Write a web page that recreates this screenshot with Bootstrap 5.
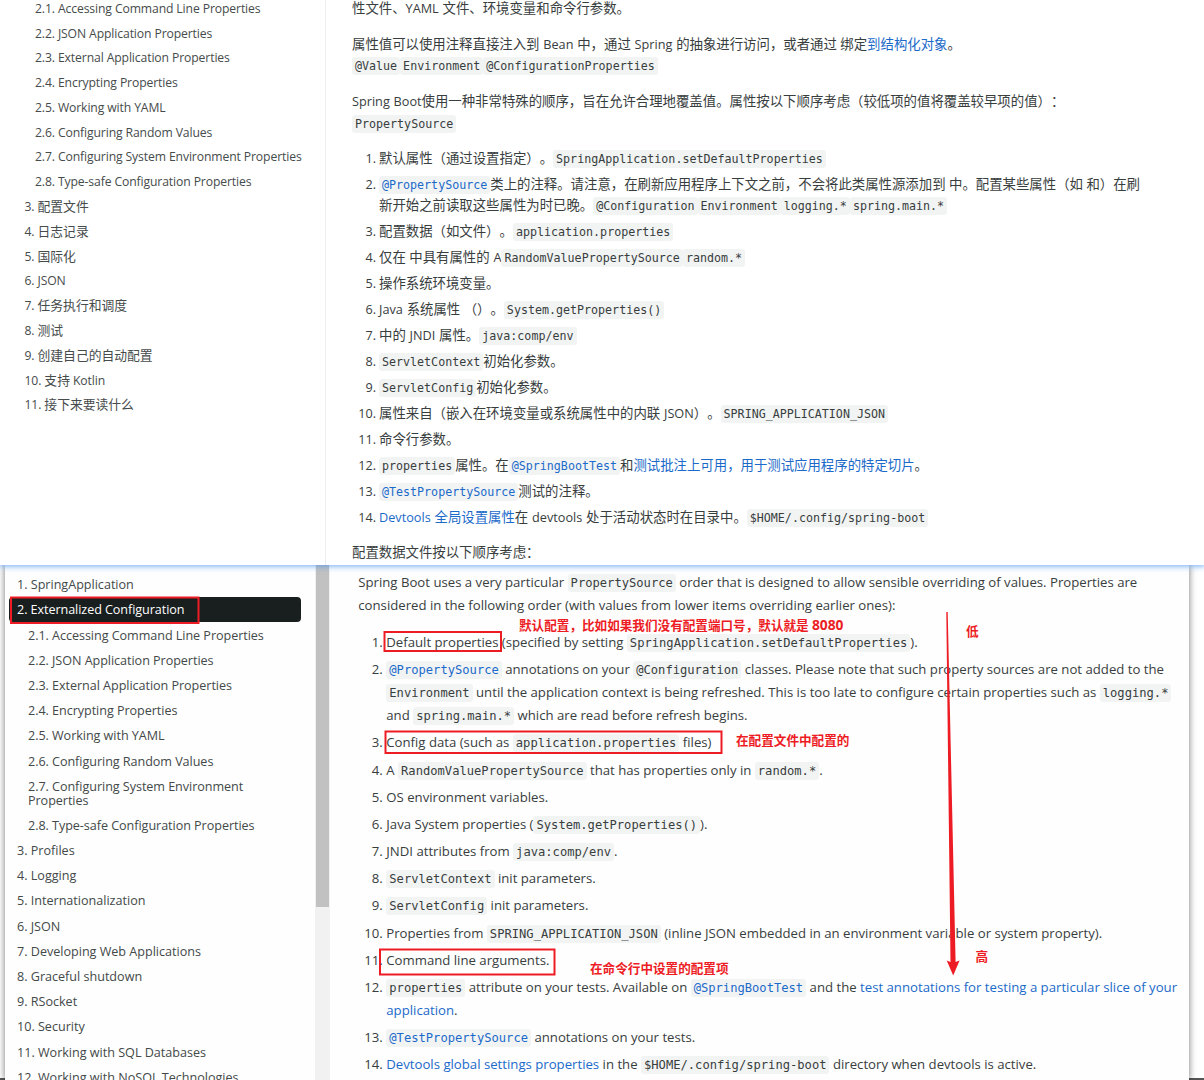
<!DOCTYPE html>
<html lang="zh-CN">
<head>
<meta charset="utf-8">
<meta name="viewport" content="width=device-width, initial-scale=1">
<title>Externalized Configuration</title>
<link href="https://cdn.jsdelivr.net/npm/bootstrap@5.3.0/dist/css/bootstrap.min.css" rel="stylesheet">
<style>
body{height:1080px;overflow:hidden;background:#fff;color:#383d3d;font-family:"Open Sans","Noto Sans CJK SC",sans-serif;text-spacing-trim:space-all}
a{color:#1b6ac9;text-decoration:none}
code{font-family:"DejaVu Sans Mono",monospace;line-height:1;background:#f2f4f4;border-radius:3px;padding:2px 3px;color:inherit}
.line{display:block;white-space:nowrap}
.num{flex:none;text-align:right;white-space:pre}
/* upper window */
.win-a{height:565px;z-index:2;box-shadow:0 0 6px 1px rgba(60,140,240,.75)}
.toc-a{width:326px;border-right:1px solid #eceff0;font-size:12.2px;line-height:24.81px;letter-spacing:-.12px;color:#464b4b}
.toc-a ul{margin-top:-3.3px}
.toc-a li{height:24.81px;padding-left:24.5px;white-space:nowrap}
.toc-a li.sub{padding-left:35px}
.toc-a .zh{font-size:12.8px;line-height:1;letter-spacing:0}
.doc-a{padding-left:26px;font-size:13.4px;line-height:21.7px}
.doc-a .line{height:21.7px}
.doc-a .en{font-size:12.7px;line-height:1;word-spacing:.5px}
.doc-a .num{font-size:12.6px}
.doc-a p{margin:0 0 14px}
.doc-a p:first-child{margin-top:-2.2px}
.doc-a ol{margin:-.7px 0 12.9px}
.doc-a li{margin-bottom:4.3px}
.doc-a .num{width:27px;padding-right:3px}
.doc-a code{font-size:11.67px}
/* lower window */
.win-b{height:515px;background:#fff}
.panel{margin-left:5px;width:1184px;background:#fefefe;box-shadow:0 0 7px rgba(0,0,0,.55)}
.toc-b{width:310px;padding:6.6px 0 0 3.5px;font-size:12.6px;line-height:14px;letter-spacing:-.01px;color:#434949}
.toc-b li{padding:6.6px 8.5px 4.6px;width:292.5px;white-space:nowrap;border-radius:4px}
.toc-b li.sub{padding-left:19.5px;letter-spacing:-.05px}
.toc-b li.now{background:#191e1e;color:#fff;letter-spacing:-.07px}
.track{width:15px;background:#f1f1f1}
.thumb{width:12.5px;height:342px;background:#c1c1c1;margin-left:1px}
.doc-b{padding:6.2px 0 0 28.3px;font-size:13.18px;line-height:23px}
.doc-b .line{height:23px}
.doc-b p{margin:0 0 13.8px}
.doc-b li{margin-bottom:4.2px}
.doc-b .num{width:28px;padding-right:3.5px}
.doc-b code{font-size:12.14px}
.marks{left:0;top:0;z-index:3;pointer-events:none}
.note{z-index:3;font:bold 12.6px/16px "Open Sans","Noto Sans CJK SC",sans-serif;color:#ed1c24;white-space:nowrap}
.port{font-size:13.8px;line-height:1}
.n1{left:519px;top:618px}.n2{left:736px;top:733px}.n3{left:590px;top:961px}.n4{left:966px;top:624px}.n5{left:975.5px;top:949px}
.edge{height:2px;bottom:0;background:#555}
</style>
</head>
<body class="position-relative">
<section class="win-a d-flex bg-white position-relative">
<nav class="toc-a flex-shrink-0 overflow-hidden">
<ul class="list-unstyled mb-0">
<li class="sub">2.1. Accessing Command Line Properties</li>
<li class="sub">2.2. JSON Application Properties</li>
<li class="sub">2.3. External Application Properties</li>
<li class="sub">2.4. Encrypting Properties</li>
<li class="sub">2.5. Working with YAML</li>
<li class="sub">2.6. Configuring Random Values</li>
<li class="sub">2.7. Configuring System Environment Properties</li>
<li class="sub">2.8. Type-safe Configuration Properties</li>
<li>3. <span class="zh">配置文件</span></li>
<li>4. <span class="zh">日志记录</span></li>
<li>5. <span class="zh">国际化</span></li>
<li>6. JSON</li>
<li>7. <span class="zh">任务执行和调度</span></li>
<li>8. <span class="zh">测试</span></li>
<li>9. <span class="zh">创建自己的自动配置</span></li>
<li>10. <span class="zh">支持</span> Kotlin</li>
<li>11. <span class="zh">接下来要读什么</span></li>
</ul>
</nav>
<article class="doc-a flex-grow-1 overflow-hidden">
<p><span class="line">性文件、<span class="en">YAML </span>文件、环境变量和命令行参数。</span></p>
<p><span class="line">属性值可以使用注释直接注入到<span class="en"> Bean </span>中，通过<span class="en"> Spring </span>的抽象进行访问，或者通过 绑定<a href="#">到结构化对象</a>。</span>
<span class="line"><code>@Value</code><code>Environment</code><code>@ConfigurationProperties</code></span></p>
<p><span class="line"><span class="en">Spring Boot</span>使用一种非常特殊的顺序，旨在允许合理地覆盖值。属性按以下顺序考虑（较低项的值将覆盖较早项的值）：</span>
<span class="line"><code>PropertySource</code></span></p>
<ol class="list-unstyled">
<li class="d-flex"><span class="num">1.</span><div><span class="line">默认属性（通过设置指定）。<code>SpringApplication.setDefaultProperties</code></span></div></li>
<li class="d-flex"><span class="num">2.</span><div><span class="line"><a href="#"><code>@PropertySource</code></a>类上的注释。请注意，在刷新应用程序上下文之前，不会将此类属性源添加到 中。配置某些属性（如 和）在刷</span><span class="line">新开始之前读取这些属性为时已晚。<code>@Configuration</code><code>Environment</code><code>logging.*</code><code>spring.main.*</code></span></div></li>
<li class="d-flex"><span class="num">3.</span><div><span class="line">配置数据（如文件）。<code>application.properties</code></span></div></li>
<li class="d-flex"><span class="num">4.</span><div><span class="line">仅在 中具有属性的<span class="en"> A</span><code>RandomValuePropertySource</code><code>random.*</code></span></div></li>
<li class="d-flex"><span class="num">5.</span><div><span class="line">操作系统环境变量。</span></div></li>
<li class="d-flex"><span class="num">6.</span><div><span class="line"><span class="en">Java </span>系统属性 （）。<code>System.getProperties()</code></span></div></li>
<li class="d-flex"><span class="num">7.</span><div><span class="line">中的<span class="en"> JNDI </span>属性。<code>java:comp/env</code></span></div></li>
<li class="d-flex"><span class="num">8.</span><div><span class="line"><code>ServletContext</code>初始化参数。</span></div></li>
<li class="d-flex"><span class="num">9.</span><div><span class="line"><code>ServletConfig</code>初始化参数。</span></div></li>
<li class="d-flex"><span class="num">10.</span><div><span class="line">属性来自（嵌入在环境变量或系统属性中的内联<span class="en"> JSON</span>）。<code>SPRING_APPLICATION_JSON</code></span></div></li>
<li class="d-flex"><span class="num">11.</span><div><span class="line">命令行参数。</span></div></li>
<li class="d-flex"><span class="num">12.</span><div><span class="line"><code>properties</code>属性。在<a href="#"><code>@SpringBootTest</code></a>和<a href="#">测试批注上可用，用于测试应用程序的特定切片</a>。</span></div></li>
<li class="d-flex"><span class="num">13.</span><div><span class="line"><a href="#"><code>@TestPropertySource</code></a>测试的注释。</span></div></li>
<li class="d-flex"><span class="num">14.</span><div><span class="line"><a href="#"><span class="en">Devtools </span>全局设置属性</a>在<span class="en"> devtools </span>处于活动状态时在目录中。<code>$HOME/.config/spring-boot</code></span></div></li>
</ol>
<p class="mb-0"><span class="line">配置数据文件按以下顺序考虑：</span></p>
</article>
</section>
<section class="win-b position-relative overflow-hidden">
<div class="edge position-absolute start-0 end-0"></div>
<div class="panel d-flex h-100 position-relative">
<nav class="toc-b flex-shrink-0">
<ul class="list-unstyled mb-0">
<li>1. SpringApplication</li>
<li class="now">2. Externalized Configuration</li>
<li class="sub">2.1. Accessing Command Line Properties</li>
<li class="sub">2.2. JSON Application Properties</li>
<li class="sub">2.3. External Application Properties</li>
<li class="sub">2.4. Encrypting Properties</li>
<li class="sub">2.5. Working with YAML</li>
<li class="sub">2.6. Configuring Random Values</li>
<li class="sub">2.7. Configuring System Environment<br>Properties</li>
<li class="sub">2.8. Type-safe Configuration Properties</li>
<li>3. Profiles</li>
<li>4. Logging</li>
<li>5. Internationalization</li>
<li>6. JSON</li>
<li>7. Developing Web Applications</li>
<li>8. Graceful shutdown</li>
<li>9. RSocket</li>
<li>10. Security</li>
<li>11. Working with SQL Databases</li>
<li>12. Working with NoSQL Technologies</li>
</ul>
</nav>
<div class="track flex-shrink-0"><div class="thumb"></div></div>
<article class="doc-b flex-grow-1">
<p><span class="line">Spring Boot uses a very particular <code>PropertySource</code> order that is designed to allow sensible overriding of values. Properties are</span>
<span class="line">considered in the following order (with values from lower items overriding earlier ones):</span></p>
<ol class="list-unstyled mb-0">
<li class="d-flex"><span class="num">1.</span><div><span class="line">Default properties (specified by setting <code>SpringApplication.setDefaultProperties</code>).</span></div></li>
<li class="d-flex"><span class="num">2.</span><div><span class="line"><a href="#"><code>@PropertySource</code></a> annotations on your <code>@Configuration</code> classes. Please note that such property sources are not added to the</span>
<span class="line"><code>Environment</code> until the application context is being refreshed. This is too late to configure certain properties such as <code>logging.*</code></span>
<span class="line">and <code>spring.main.*</code> which are read before refresh begins.</span></div></li>
<li class="d-flex"><span class="num">3.</span><div><span class="line">Config data (such as <code>application.properties</code> files)</span></div></li>
<li class="d-flex"><span class="num">4.</span><div><span class="line">A <code>RandomValuePropertySource</code> that has properties only in <code>random.*</code>.</span></div></li>
<li class="d-flex"><span class="num">5.</span><div><span class="line">OS environment variables.</span></div></li>
<li class="d-flex"><span class="num">6.</span><div><span class="line">Java System properties (<code>System.getProperties()</code>).</span></div></li>
<li class="d-flex"><span class="num">7.</span><div><span class="line">JNDI attributes from <code>java:comp/env</code>.</span></div></li>
<li class="d-flex"><span class="num">8.</span><div><span class="line"><code>ServletContext</code> init parameters.</span></div></li>
<li class="d-flex"><span class="num">9.</span><div><span class="line"><code>ServletConfig</code> init parameters.</span></div></li>
<li class="d-flex"><span class="num">10.</span><div><span class="line">Properties from <code>SPRING_APPLICATION_JSON</code> (inline JSON embedded in an environment variable or system property).</span></div></li>
<li class="d-flex"><span class="num">11.</span><div><span class="line">Command line arguments.</span></div></li>
<li class="d-flex"><span class="num">12.</span><div><span class="line"><code>properties</code> attribute on your tests. Available on <a href="#"><code>@SpringBootTest</code></a> and the <a href="#">test annotations for testing a particular slice of your</a></span>
<span class="line"><a href="#">application</a>.</span></div></li>
<li class="d-flex"><span class="num">13.</span><div><span class="line"><a href="#"><code>@TestPropertySource</code></a> annotations on your tests.</span></div></li>
<li class="d-flex"><span class="num">14.</span><div><span class="line"><a href="#">Devtools global settings properties</a> in the <code>$HOME/.config/spring-boot</code> directory when devtools is active.</span></div></li>
</ol>
</article>
</div>
</section>
<svg class="marks position-absolute" width="1204" height="1080" viewBox="0 0 1204 1080" aria-hidden="true">
<g fill="none" stroke="#ed1c24" stroke-width="2"><rect x="11" y="597.5" width="187.5" height="25.5"/><rect x="384.5" y="632" width="116.5" height="19"/><rect x="385.5" y="731.5" width="336" height="21.5"/><rect x="380" y="949.5" width="174.5" height="25"/></g>
<path d="M946.3 612h1.4L955.6 962l4-1.5L953.2 975.5 946.7 960.5l3.8 1.5z" fill="#ed1c24"/>
</svg>
<div class="note n1 position-absolute">默认配置，比如如果我们没有配置端口号，默认就是 <span class="port">8080</span></div>
<div class="note n2 position-absolute">在配置文件中配置的</div>
<div class="note n3 position-absolute">在命令行中设置的配置项</div>
<div class="note n4 position-absolute">低</div>
<div class="note n5 position-absolute">高</div>
<script src="https://cdn.jsdelivr.net/npm/bootstrap@5.3.0/dist/js/bootstrap.bundle.min.js"></script>
</body>
</html>
